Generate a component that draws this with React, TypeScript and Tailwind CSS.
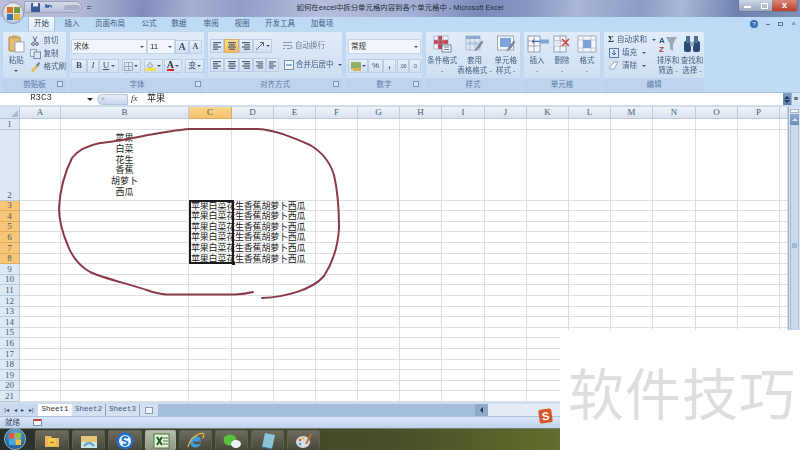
import type { ReactNode } from "react"

const columns = [
  { name: "A", w: 41 },
  { name: "B", w: 128 },
  { name: "C", w: 43 },
  { name: "D", w: 42 },
  { name: "E", w: 42 },
  { name: "F", w: 42 },
  { name: "G", w: 42 },
  { name: "H", w: 42 },
  { name: "I", w: 43 },
  { name: "J", w: 42 },
  { name: "K", w: 42 },
  { name: "L", w: 42 },
  { name: "M", w: 42 },
  { name: "N", w: 43 },
  { name: "O", w: 42 },
  { name: "P", w: 42 },
  { name: "", w: 8 },
]

const tabs = [
  { name: "开始", w: 27 },
  { name: "插入", w: 34 },
  { name: "页面布局", w: 42 },
  { name: "公式", w: 36 },
  { name: "数据", w: 24 },
  { name: "审阅", w: 40 },
  { name: "视图", w: 22 },
  { name: "开发工具", w: 54 },
  { name: "加载项", w: 30 },
]

const rows = Array.from({ length: 21 }, (_, i) => i + 1)
const vegetables = ["苹果", "白菜", "花生", "香蕉", "胡萝卜", "西瓜"]

function Caret({ className = "" }: { className?: string }) {
  return <span className={`inline-block w-0 h-0 border-x-[2px] border-x-transparent border-t-[2px] border-t-[#44546a] ${className}`} />
}

function Group({ w, label, launcher, children }: { w: number; label: string; launcher?: boolean; children: ReactNode }) {
  return (
    <div
      className="h-full flex flex-col rounded-[2px] border border-[#c3d5ea] bg-[linear-gradient(#e2ecf9,#d3e2f4_55%,#c9dbf1)] overflow-hidden"
      style={{ width: w }}
    >
      <div className="flex-1 min-h-0 relative">{children}</div>
      <div className="h-[13px] shrink-0 bg-[#bdd3ee] flex items-center justify-center relative text-[7.5px] text-[#5d7ca6]">
        {label}
        {launcher && (
          <span className="absolute right-[3px] top-[3px] w-[6px] h-[6px] border border-[#7d95b5] bg-[#d5e3f4]" />
        )}
      </div>
    </div>
  )
}

function SmallBtn({ children, className = "", w }: { children: ReactNode; className?: string; w?: number }) {
  return (
    <div
      className={`h-[14px] flex items-center justify-center border border-[#b9cde6] bg-[linear-gradient(#e6eff9,#cfdff2)] text-[#3d4f68] ${className}`}
      style={{ width: w }}
    >
      {children}
    </div>
  )
}

function SmallRow({ icon, label, caret }: { icon: ReactNode; label: string; caret?: boolean }) {
  return (
    <div className="h-[13px] flex items-center gap-[3px] text-[7.5px] text-[#47607f] whitespace-nowrap">
      <span className="w-[11px] h-[11px] flex items-center justify-center">{icon}</span>
      {label}
      {caret && <Caret className="ml-[2px]" />}
    </div>
  )
}

function BigBtn({ w, icon, lines }: { w: number; icon: ReactNode; lines: string[] }) {
  return (
    <div className="flex flex-col items-center pt-[3px]" style={{ width: w }}>
      <div className="h-[18px] w-[20px]">{icon}</div>
      <div className="mt-[3px] text-[7.5px] leading-[10px] text-[#47607f] text-center whitespace-nowrap">
        {lines.map((l) => (
          <div key={l}>{l}</div>
        ))}
      </div>
    </div>
  )
}

function Lines({ align }: { align: "l" | "c" | "r" }) {
  const xs = align === "l" ? [2, 2, 2, 2] : align === "c" ? [2, 3, 2, 3] : [2, 4, 2, 4]
  const ws = align === "l" ? [8, 5, 8, 5] : align === "c" ? [8, 6, 8, 6] : [8, 6, 8, 6]
  return (
    <svg width="12" height="10" viewBox="0 0 12 10">
      {xs.map((x, i) => (
        <rect key={i} x={x} y={1 + i * 2.2} width={ws[i]} height="1.2" fill="#4d5b70" />
      ))}
    </svg>
  )
}

function Brush() {
  return <path d="M11 16l2-4 5-6 1 1-4 6z" fill="#7f8b9c" stroke="#59667a" strokeWidth=".5" />
}

function CondIcon() {
  return (
    <svg width="20" height="18" viewBox="0 0 20 18">
      <rect x="2" y="1" width="14" height="13" fill="#f3f6fa" stroke="#9aa8ba" strokeWidth=".7" />
      <rect x="2" y="5" width="14" height="4" fill="#c7405a" />
      <rect x="6" y="1" width="4" height="13" fill="#c7405a" />
      <path d="M6 1v13M11 1v13M2 5h14M2 9h14" stroke="#9aa8ba" strokeWidth=".6" />
      <rect x="10" y="10" width="9" height="7" fill="#f4f6f9" stroke="#4b5a6e" strokeWidth=".7" />
      <path d="M12 12h5M12 14.500h5" stroke="#4b5a6e" strokeWidth=".8" />
    </svg>
  )
}

function TableIcon() {
  return (
    <svg width="20" height="18" viewBox="0 0 20 18">
      <rect x="2" y="1" width="14" height="14" fill="#dfe9f5" stroke="#9aa8ba" strokeWidth=".7" />
      <rect x="2" y="1" width="14" height="3" fill="#8ea9ce" />
      <rect x="2" y="7" width="14" height="3" fill="#b9cde6" />
      <path d="M6 1v14M11 1v14" stroke="#9aa8ba" strokeWidth=".6" />
      <Brush />
    </svg>
  )
}

function StyleIcon() {
  return (
    <svg width="20" height="18" viewBox="0 0 20 18">
      <rect x="1.500" y="1" width="16" height="14" fill="#f3f6fa" stroke="#8c98a8" strokeWidth=".8" />
      <rect x="4" y="3" width="11" height="9" fill="#7fa3dc" />
      <Brush />
    </svg>
  )
}

function InsertIcon() {
  return (
    <svg width="24" height="18" viewBox="0 0 24 18">
      <rect x="1" y="1" width="12" height="16" fill="#f4f6f9" stroke="#6f7d90" strokeWidth=".7" />
      <path d="M7 1v16M1 6h12M1 11h12" stroke="#6f7d90" strokeWidth=".6" />
      <rect x="13" y="4.500" width="9" height="4" fill="#7fa6d8" />
      <path d="M13 6.500H5M7.500 4.500 5 6.500l2.500 2" stroke="#2e5f9f" fill="none" strokeWidth=".9" />
    </svg>
  )
}

function DeleteIcon() {
  return (
    <svg width="20" height="18" viewBox="0 0 20 18">
      <rect x="2" y="1" width="12" height="16" fill="#f4f6f9" stroke="#6f7d90" strokeWidth=".7" />
      <path d="M8 1v16M2 6h12M2 11h12" stroke="#6f7d90" strokeWidth=".6" />
      <rect x="2" y="6" width="6" height="5" fill="#dfe7f1" />
      <path d="M10 4l7 7M17 4l-7 7" stroke="#d5423a" strokeWidth="1.500" />
    </svg>
  )
}

function FormatIcon() {
  return (
    <svg width="20" height="18" viewBox="0 0 20 18">
      <rect x="1" y="1" width="18" height="16" fill="#f3f6fa" stroke="#8c98a8" strokeWidth=".8" />
      <path d="M6 1v16M14 1v16M1 5h18M1 13h18" stroke="#a8b4c4" strokeWidth=".6" />
      <rect x="6" y="5" width="8" height="8" fill="#7fa3d0" />
    </svg>
  )
}

function TaskBtn({ w, active, children }: { w: number; active?: boolean; children: ReactNode }) {
  return (
    <div
      className={`h-[20px] flex items-center justify-center rounded-[2px] border-x border-t ${
        active
          ? "border-[#a7ad9b] bg-[linear-gradient(#b6bbac,#8f9686)]"
          : "border-[#5f5f50] bg-[linear-gradient(#6d6b5c,#46463a)]"
      }`}
      style={{ width: w }}
    >
      {children}
    </div>
  )
}

export default function App() {
  return (
    <div className="relative w-[800px] h-[450px] overflow-hidden bg-white font-['Liberation_Sans','Noto_Sans_CJK_SC',sans-serif]">
      <div className="relative h-full flex flex-col blur-[0.4px]">
        {/* title bar */}
        <div className="h-[17px] shrink-0 relative bg-[linear-gradient(100deg,#b9bed6_0%,#b4b9d3_10%,#9aa5c9_14%,#7f8cbb_18%,#a7b0d2_24%,#8f9dc8_30%,#b5bedc_40%,#a2afd4_52%,#7b8bb8_60%,#8697c2_66%,#a8b6d7_72%,#8b9dc6_80%,#a9b8d8_85%,#6f82ae_92%,#7e8fb8_100%)] flex justify-center">
          <span className="mt-[3px] text-[7.4px] leading-[10px] text-[#222c3c] whitespace-nowrap">
            如何在excel中拆分单元格内容到各个单元格中 - Microsoft Excel
          </span>
          <div className="absolute right-[2px] top-0 w-[60px] h-[12px] flex rounded-b-[3px] overflow-hidden border border-t-0 border-[#6d7b96]">
            <div className="w-[17px] bg-[linear-gradient(#cfd7e6,#9aa8c2)] flex items-center justify-center">
              <span className="w-[7px] h-[2px] bg-white mt-[3px]" />
            </div>
            <div className="w-[16px] bg-[linear-gradient(#cfd7e6,#9aa8c2)] flex items-center justify-center">
              <span className="w-[7px] h-[6px] border border-white" />
            </div>
            <div className="flex-1 bg-[linear-gradient(#d98878,#b8402c)] flex items-center justify-center text-white text-[9px] leading-none font-bold">
              x
            </div>
          </div>
        </div>

        {/* tabs */}
        <div className="h-[14px] shrink-0 bg-[#bfdaf6] relative flex pl-[28px] items-end">
          {tabs.map((t, i) => (
            <div
              key={t.name}
              className={`h-[15px] -mt-[1px] flex items-center justify-center text-[7.5px] whitespace-nowrap ${
                i === 0
                  ? "bg-[linear-gradient(#f4f8fd,#dde9f7)] border-x border-t border-[#a9c0dc] rounded-t-[2px] text-[#2d3f58]"
                  : "text-[#3f5a80]"
              }`}
              style={{ width: t.w }}
            >
              {t.name}
            </div>
          ))}
          <div className="absolute right-0 top-0 h-full w-[50px] flex items-center justify-between pr-[4px] text-[#4d6a90] text-[9px]">
            <span className="w-[8px] h-[8px] rounded-full bg-[#2f6fb5] text-white text-[6px] leading-[8px] text-center">?</span>
            <span className="w-[4px] h-[1px] bg-[#5d7796]" />
            <span className="w-[5px] h-[4px] border border-[#5d7796]" />
            <span className="leading-none text-[8px]">×</span>
          </div>
        </div>

        {/* ribbon */}
        <div className="h-[61px] shrink-0 bg-[#bfdaf6] flex gap-[2px] pl-[2px]">
          <Group w={65} label="剪贴板" launcher>
            <div className="flex h-full">
              <div className="w-[28px] flex flex-col items-center pt-[3px]">
                <svg width="18" height="18" viewBox="0 0 18 18">
                  <rect x="2" y="2" width="11" height="14" rx="1" fill="#e5bd74" stroke="#a9874a" />
                  <rect x="5" y="0.5" width="5" height="3" fill="#c9a45f" />
                  <rect x="8" y="7" width="9" height="10" fill="#fafcff" stroke="#9aa8b8" />
                </svg>
                <span className="mt-[3px] text-[7.5px] leading-[10px] text-[#47607f]">粘贴</span>
                <Caret className="mt-[4px]" />
              </div>
              <div className="flex flex-col pt-[2px]">
                <SmallRow
                  label="剪切"
                  icon={
                    <svg width="10" height="10" viewBox="0 0 10 10" fill="none" stroke="#56657a" strokeWidth="1">
                      <path d="M3 0.5 6 6M7 0.5 4 6" />
                      <circle cx="3" cy="8" r="1.400" />
                      <circle cx="7" cy="8" r="1.400" />
                    </svg>
                  }
                />
                <SmallRow
                  label="复制"
                  icon={
                    <svg width="11" height="10" viewBox="0 0 11 10">
                      <rect x="0.5" y="0.5" width="6" height="7" fill="#eef3fa" stroke="#8ba1bc" />
                      <rect x="4" y="3" width="6.500" height="6.500" fill="#dbe7f5" stroke="#6e8bb0" />
                    </svg>
                  }
                />
                <SmallRow
                  label="格式刷"
                  icon={
                    <svg width="11" height="11" viewBox="0 0 11 11">
                      <path d="M1 10 6 4l2 2-5 5z" fill="#e8b949" />
                      <path d="M6 4l3-3 1 1-2 4z" fill="#6b7b91" />
                    </svg>
                  }
                />
              </div>
            </div>
          </Group>

          <Group w={136} label="字体" launcher>
            <div className="flex flex-col gap-[5px] pt-[7px] pl-[1px]">
              <div className="flex items-center">
                <div className="w-[76px] h-[15px] bg-[#f2f6fc] border border-[#c3d3e8] flex items-center justify-between px-[2px] text-[7.5px] text-[#333]">
                  宋体
                  <Caret />
                </div>
                <div className="w-[28px] h-[15px] bg-[#f2f6fc] border border-[#c3d3e8] flex items-center justify-between px-[2px] text-[8px] text-[#333]">
                  11
                  <Caret />
                </div>
                <SmallBtn w={14} className="font-['Liberation_Serif',serif] text-[10px] font-bold">A</SmallBtn>
                <SmallBtn w={13} className="font-['Liberation_Serif',serif] text-[8px] font-bold">A</SmallBtn>
              </div>
              <div className="flex items-center gap-[1px]">
                <div className="flex">
                  <SmallBtn w={16} className="font-['Liberation_Serif',serif] text-[9px] font-bold">B</SmallBtn>
                  <SmallBtn w={12} className="font-['Liberation_Serif',serif] text-[9px] italic">I</SmallBtn>
                  <SmallBtn w={20} className="font-['Liberation_Serif',serif] text-[9px] underline gap-[2px]">U<Caret /></SmallBtn>
                </div>
                <SmallBtn w={20} className="gap-[1px] ml-[2px]">
                  <svg width="9" height="9" viewBox="0 0 9 9" fill="none" stroke="#8e9aab" strokeWidth=".8"><path d="M.5.5h8v8h-8zM4.5.5v8M.5 4.5h8" /></svg>
                  <Caret />
                </SmallBtn>
                <SmallBtn w={20} className="gap-[1px] ml-[2px]">
                  <svg width="11" height="10" viewBox="0 0 11 10"><rect y="7" width="11" height="3" fill="#f2e34c" /><path d="M2 5l3-4 3 4-3 2z" fill="#cfd8e3" stroke="#7d8a9c" strokeWidth=".6" /></svg>
                  <Caret />
                </SmallBtn>
                <SmallBtn w={20} className="gap-[1px]">
                  <span className="font-['Liberation_Serif',serif] text-[10px] leading-[8px] font-bold border-b-[2px] border-[#d8262c] text-[#333]">A</span>
                  <Caret />
                </SmallBtn>
                <SmallBtn w={20} className="gap-[1px] ml-[2px] text-[8px]">变<Caret /></SmallBtn>
              </div>
            </div>
          </Group>

          <Group w={136} label="对齐方式" launcher>
            <div className="flex flex-col gap-[5px] pt-[7px] pl-[2px]">
              <div className="flex items-center">
                <SmallBtn w={14}><Lines align="l" /></SmallBtn>
                <SmallBtn w={15} className="bg-[linear-gradient(#fbdc93,#f4bd5f)] border-[#d7b06c]"><Lines align="c" /></SmallBtn>
                <SmallBtn w={14}><Lines align="r" /></SmallBtn>
                <SmallBtn w={19} className="gap-[1px]">
                  <svg width="10" height="10" viewBox="0 0 10 10" fill="none" stroke="#59677c"><path d="M1 9 8 2M5 1.500h3.500V5" /></svg>
                  <Caret />
                </SmallBtn>
                <div className="ml-[11px] flex items-center gap-[2px] text-[7.5px] text-[#6b8098] whitespace-nowrap">
                  <svg width="10" height="10" viewBox="0 0 10 10" fill="none" stroke="#8a98ab"><path d="M0 1.500h9M0 4.500h7q2 0 2 1.500T7 7.500H4M0 7.500h2" /></svg>
                  自动换行
                </div>
              </div>
              <div className="flex items-center">
                <SmallBtn w={14}><Lines align="l" /></SmallBtn>
                <SmallBtn w={15}><Lines align="c" /></SmallBtn>
                <SmallBtn w={14}><Lines align="r" /></SmallBtn>
                <SmallBtn w={13}><Lines align="r" /></SmallBtn>
                <SmallBtn w={13}><Lines align="l" /></SmallBtn>
                <div className="ml-[5px] flex items-center gap-[2px] text-[7.5px] text-[#47607f] whitespace-nowrap">
                  <svg width="10" height="10" viewBox="0 0 10 10"><rect x=".5" y=".5" width="9" height="9" fill="#eef3fa" stroke="#7d8ea4" /><path d="M2 5h6" stroke="#2f6fb5" /></svg>
                  合并后居中
                  <Caret className="ml-[2px]" />
                </div>
              </div>
            </div>
          </Group>

          <Group w={78} label="数字" launcher>
            <div className="flex flex-col gap-[5px] pt-[7px] pl-[2px]">
              <div className="w-[73px] h-[15px] bg-[#f2f6fc] border border-[#c3d3e8] flex items-center justify-between px-[2px] text-[7.5px] text-[#333]">
                常规
                <Caret />
              </div>
              <div className="flex items-center">
                <SmallBtn w={20} className="gap-[1px]">
                  <svg width="10" height="9" viewBox="0 0 10 9"><rect width="10" height="7" fill="#8fb06b" /><rect x="2" y="6" width="8" height="3" fill="#d9b04f" /></svg>
                  <Caret />
                </SmallBtn>
                <SmallBtn w={15} className="text-[8px]">%</SmallBtn>
                <SmallBtn w={13} className="text-[9px] font-bold">,</SmallBtn>
                <SmallBtn w={12} className="ml-[1px] text-[5px] leading-none">.00</SmallBtn>
                <SmallBtn w={12} className="text-[5px] leading-none">.0</SmallBtn>
              </div>
            </div>
          </Group>

          <Group w={96} label="样式">
            <div className="flex pl-[1px]">
              <BigBtn w={31} lines={["条件格式", "-"]} icon={<CondIcon />} />
              <BigBtn w={34} lines={["套用", "表格格式 -"]} icon={<TableIcon />} />
              <BigBtn w={29} lines={["单元格", "样式 -"]} icon={<StyleIcon />} />
            </div>
          </Group>

          <Group w={78} label="单元格">
            <div className="flex">
              <BigBtn w={26} lines={["插入", "-"]} icon={<InsertIcon />} />
              <BigBtn w={24} lines={["删除", "-"]} icon={<DeleteIcon />} />
              <BigBtn w={26} lines={["格式", "-"]} icon={<FormatIcon />} />
            </div>
          </Group>

          <Group w={102} label="编辑">
            <div className="flex pl-[4px]">
              <div className="w-[48px] flex flex-col pt-[1px]">
                <SmallRow label="自动求和" caret icon={<span className="font-['Liberation_Serif',serif] text-[9px] font-bold text-[#333]">Σ</span>} />
                <SmallRow
                  label="填充"
                  caret
                  icon={<svg width="10" height="10" viewBox="0 0 10 10"><rect x=".5" y=".5" width="9" height="9" fill="#dbe7f5" stroke="#5b7ba6" /><path d="M5 2v5M3 5l2 2 2-2" fill="none" stroke="#2f5f9c" /></svg>}
                />
                <SmallRow
                  label="清除"
                  caret
                  icon={<svg width="11" height="9" viewBox="0 0 11 9"><path d="M1 7 6 1h4L6 8H3z" fill="#f4f6f9" stroke="#7a8798" strokeWidth=".7" /></svg>}
                />
              </div>
              <BigBtn
                w={24}
                lines={["排序和", "筛选 -"]}
                icon={
                  <svg width="20" height="18" viewBox="0 0 20 18">
                    <text x="1" y="8" fontSize="8" fontWeight="bold" fill="#2b4f80" fontFamily="Liberation Sans">A</text>
                    <text x="1" y="17" fontSize="8" fontWeight="bold" fill="#a33" fontFamily="Liberation Sans">Z</text>
                    <path d="M8 2h11l-4 7v7l-3-2V9z" fill="#9aa8b8" />
                  </svg>
                }
              />
              <BigBtn
                w={24}
                lines={["查找和", "选择 -"]}
                icon={
                  <svg width="20" height="18" viewBox="0 0 20 18">
                    <rect x="2" y="6" width="7" height="11" rx="2" fill="#2b4a75" />
                    <rect x="11" y="6" width="7" height="11" rx="2" fill="#2b4a75" />
                    <rect x="4" y="1" width="4" height="7" fill="#4c6c99" />
                    <rect x="12" y="1" width="4" height="7" fill="#4c6c99" />
                    <rect x="8" y="7" width="4" height="4" fill="#8ba4c6" />
                  </svg>
                }
              />
            </div>
          </Group>
        </div>

        {/* formula bar */}
        <div className="h-[13px] shrink-0 bg-[#a9c1dc] flex flex-col">
          <div className="h-[12px] mt-[1px] bg-white flex items-center relative">
            <div className="w-[87px] shrink-0 text-center pr-[5px] font-['Liberation_Mono',monospace] text-[9px] text-[#333]">R3C3</div>
            <span className="w-0 h-0 border-x-[3px] border-x-transparent border-t-[3px] border-t-[#222]" />
            <div className="ml-[4px] w-[31px] h-[11px] rounded-l-full border border-[#b3c4da] bg-[linear-gradient(#e6eef8,#c6d6ea)] flex items-center pl-[3px] text-[7px] text-[#8fa2bc]">
              ×
            </div>
            <span className="ml-[3px] w-[12px] font-['Liberation_Serif',serif] italic text-[9px] text-[#333]">fx</span>
            <span className="ml-[4px] text-[9px] text-[#222]">苹果</span>
            <div className="absolute right-0 top-0 h-full flex">
              <div className="w-[8px] bg-[linear-gradient(#7e9dc6,#5b7fae)] flex flex-col items-center justify-center gap-[1px]">
                <span className="w-0 h-0 border-x-[3px] border-x-transparent border-b-[3px] border-b-[#20344f]" />
                <span className="w-0 h-0 border-x-[3px] border-x-transparent border-t-[3px] border-t-[#20344f]" />
              </div>
              <div className="w-[9px] bg-[#d7e4f4] border-l border-[#9fb6d2] flex items-center justify-center text-[8px] leading-none font-bold text-[#223]">»</div>
            </div>
          </div>
        </div>

        {/* grid */}
        <div className="h-[299px] shrink-0 relative flex bg-[#cfdceb] pt-[2px]">
          <div className="flex-1 flex flex-col">
            <div className="h-[12px] shrink-0 flex">
              <div className="w-[20px] shrink-0 bg-[#d5e3f3] border-r border-b border-[#b2c4da] flex items-end justify-end p-[1px]">
                <span className="w-0 h-0 border-l-[7px] border-l-transparent border-b-[7px] border-b-[#a8bdd6]" />
              </div>
              {columns.map((c) => (
                <div
                  key={c.name}
                  className={`shrink-0 flex items-center justify-center border-r border-b font-['Liberation_Serif',serif] text-[9px] ${
                    c.name === "C"
                      ? "bg-[linear-gradient(#fad592,#f6c16b)] border-[#d9aa62] text-[#5c4a2a]"
                      : "bg-[linear-gradient(#eef3f9,#d8e3f0)] border-[#bccadb] text-[#4a5a70]"
                  }`}
                  style={{ width: c.w }}
                >
                  {c.name}
                </div>
              ))}
            </div>
            {rows.map((r) => {
              const sel = r >= 3 && r <= 8
              return (
                <div key={r} className={`shrink-0 flex ${r === 2 ? "h-[71px]" : "h-[10.6px]"}`}>
                  <div
                    className={`w-[20px] shrink-0 flex items-end justify-center border-r border-b font-['Liberation_Serif',serif] text-[9px] leading-[10px] text-[#4a5a70] ${
                      sel ? "bg-[#f7c677] border-[#dcae68]" : "bg-[#dde8f5] border-[#b8c9de]"
                    }`}
                  >
                    {r}
                  </div>
                  {columns.map((c) => (
                    <div
                      key={c.name}
                      className="shrink-0 relative bg-white border-r border-b border-[#dcdfe3] text-[9px] leading-[10.7px] text-[#222]"
                      style={{ width: c.w }}
                    >
                      {c.name === "B" && r === 2 && (
                        <div className="absolute left-0 right-0 bottom-[2px] text-center">
                          {vegetables.map((v) => (
                            <div key={v}>{v}</div>
                          ))}
                        </div>
                      )}
                      {c.name === "C" && sel && (
                        <span className="absolute left-[2px] top-0 whitespace-nowrap tracking-[-0.2px] z-10">苹果白菜花生香蕉胡萝卜西瓜</span>
                      )}
                    </div>
                  ))}
                </div>
              )
            })}
          </div>
          <div className="w-[12px] shrink-0 bg-[#d9e5f3] border-l border-[#9fb4cd] flex flex-col items-center pt-[2px]">
            <div className="w-[9px] h-[4px] bg-white border border-[#9fb4cd] shrink-0" />
            <div className="w-[9px] h-[11px] mt-[1px] shrink-0 bg-[linear-gradient(#8fabd0,#6c8cb8)] flex items-center justify-center">
              <span className="w-0 h-0 border-x-[3px] border-x-transparent border-b-[3px] border-b-[#dfe8f3]" />
            </div>
            <div className="w-[9px] flex-1 bg-[#c9d9ec] border-x border-[#a9bdd6] flex items-start justify-center pt-[118px]">
              <span className="w-[5px] h-[5px] bg-[#a5b8cf]" />
            </div>
          </div>
          {/* selection */}
          <div className="absolute left-[189px] top-[95px] w-[45px] h-[64px] border-2 border-[#1a1a1a] pointer-events-none z-20" />
          <div className="absolute left-[232px] top-[157px] w-[3px] h-[3px] bg-[#1a1a1a] z-20" />
        </div>

        {/* sheet tabs */}
        <div className="h-[12px] shrink-0 flex items-center bg-[#a5bedd] relative">
          <div className="w-[38px] h-full bg-[#c9daf0] flex items-center justify-around px-[2px] text-[6px] leading-none text-[#2a3c55]">
            <span>|◂</span>
            <span>◂</span>
            <span>▸</span>
            <span>▸|</span>
          </div>
          <div className="w-[34px] h-full bg-white flex items-center justify-center font-['Liberation_Mono',monospace] text-[7.5px] text-[#333]">Sheet1</div>
          <div className="w-[68px] h-full flex items-center bg-[#d3e1f3] font-['Liberation_Mono',monospace] text-[7.5px] text-[#445a78]">
            <span className="w-[34px] text-center border-r border-[#8ba4c4]">Sheet2</span>
            <span className="w-[34px] text-center border-r border-[#8ba4c4]">Sheet3</span>
          </div>
          <div className="w-[18px] h-full bg-[#d3e1f3] flex items-center justify-center">
            <span className="w-[8px] h-[7px] border border-[#8a9bb2] bg-[#eef3fa]" />
          </div>
          <div className="ml-auto w-[325px] h-full flex items-center bg-[#e4ecf6]">
            <div className="w-[13px] h-full bg-[#8ea9cc] flex items-center justify-center">
              <span className="w-0 h-0 border-y-[3px] border-y-transparent border-r-[3px] border-r-[#20344f]" />
            </div>
          </div>
        </div>

        {/* status bar */}
        <div className="h-[12px] shrink-0 flex items-center bg-[linear-gradient(#dbe7f6,#bdd1ea)] border-t border-[#a9c0dc] text-[7.5px] text-[#3d4f68]">
          <span className="ml-[5px]">就绪</span>
          <span className="ml-[13px] w-[9px] h-[7px] bg-[#f3f5f8] border border-[#7f8ea3] border-t-[2px] border-t-[#c04a3a]" />
        </div>

        {/* taskbar */}
        <div className="h-[22px] shrink-0 flex items-end pl-[35px] gap-[3px] bg-[linear-gradient(90deg,#26302c,#3b4030_20%,#4a5027_50%,#5e6b2c_68%,#6b6f3a_72%,#4e5a22_100%)] border-t border-[#777f78]">
          <TaskBtn w={34}>
            <svg width="16" height="16" viewBox="0 0 16 16">
              <path d="M1 3h6l1 2h7v9H1z" fill="#e8b95a" />
              <circle cx="8" cy="9" r="4" fill="#f6cf4d" />
              <path d="M6 9q2 2 4 0" stroke="#8a5a1a" fill="none" />
            </svg>
          </TaskBtn>
          <TaskBtn w={33}>
            <svg width="18" height="16" viewBox="0 0 18 16">
              <path d="M1 3h16v12H1z" fill="#e5c577" />
              <path d="M1 9h16v6H1z" fill="#cfe3ea" />
              <path d="M4 13q5-6 10 0" stroke="#5c9fc4" strokeWidth="2" fill="none" />
            </svg>
          </TaskBtn>
          <TaskBtn w={34}>
            <svg width="18" height="18" viewBox="0 0 18 18">
              <circle cx="9" cy="9" r="8.500" fill="#1f6fd0" />
              <circle cx="9" cy="9" r="6" fill="#f4f8fc" />
              <path d="M12 6Q9 4 7 6t2 3 2 3-4 0" stroke="#1f6fd0" strokeWidth="1.800" fill="none" />
            </svg>
          </TaskBtn>
          <TaskBtn w={31} active>
            <svg width="18" height="16" viewBox="0 0 18 16">
              <rect x="2" y="1" width="15" height="14" fill="#e6f0da" stroke="#4d7d3a" />
              <path d="M5 4l5 8M10 4l-5 8" stroke="#1d5c22" strokeWidth="2" />
              <path d="M11 5h5M11 8h5M11 11h5" stroke="#4d7d3a" />
            </svg>
          </TaskBtn>
          <TaskBtn w={33}>
            <svg width="18" height="18" viewBox="0 0 18 18">
              <path d="M3 10c0-4 3-6 6-6s5 2 5 5.500H6c0 3 5 4 8 1.500-1 3-3 4.500-5.500 4.500C5 15.500 3 13 3 10z" fill="#3d9be0" />
              <path d="M1 15C3 7 10 1 16 1.500c1.500.5 1 3-.5 5" stroke="#e9b93d" fill="none" strokeWidth="1.200" />
            </svg>
          </TaskBtn>
          <TaskBtn w={33}>
            <svg width="20" height="16" viewBox="0 0 20 16">
              <ellipse cx="8" cy="7" rx="6.500" ry="5.500" fill="#58c13c" />
              <ellipse cx="14" cy="11" rx="5" ry="4" fill="#eef2ee" />
            </svg>
          </TaskBtn>
          <TaskBtn w={33}>
            <svg width="16" height="18" viewBox="0 0 16 18">
              <path d="M5 1l10 2-3 14L2 15z" fill="#8cc4d8" />
              <path d="M2 15l10 2 .5-2.500" stroke="#3d6f86" fill="none" />
            </svg>
          </TaskBtn>
          <TaskBtn w={33}>
            <svg width="18" height="18" viewBox="0 0 18 18">
              <ellipse cx="8" cy="10" rx="7" ry="6" fill="#d7dee2" />
              <circle cx="5" cy="8" r="1.300" fill="#d9534f" />
              <circle cx="8" cy="6.500" r="1.300" fill="#e9b93d" />
              <circle cx="5" cy="12" r="1.300" fill="#4d9be0" />
              <path d="M11 12l5-10" stroke="#b5763a" strokeWidth="2" />
            </svg>
          </TaskBtn>
        </div>

        {/* office orb, quick access bar, start orb float over the bars */}
        <div className="absolute left-[2px] top-[2px] w-[22px] h-[22px] rounded-full border border-[#8f9fb8] bg-[radial-gradient(circle_at_50%_30%,#f7f3e4,#c9d2df_70%,#98a8c0)] flex items-center justify-center">
          <svg width="13" height="13" viewBox="0 0 13 13">
            <rect x="0" y="0" width="6" height="6" fill="#d8732a" />
            <rect x="7" y="0" width="6" height="6" fill="#6d9b3d" />
            <rect x="0" y="7" width="6" height="6" fill="#3d71b5" />
            <rect x="7" y="7" width="6" height="6" fill="#e0b23a" />
          </svg>
        </div>
        <div className="absolute left-[24px] top-[1px] w-[58px] h-[12px] rounded-r-full border border-[#9aa3bd] bg-[linear-gradient(#d6dbe9,#b7bfd8)] flex items-center pl-[6px] gap-[4px]">
          <svg width="9" height="9" viewBox="0 0 9 9"><rect width="9" height="9" rx="1" fill="#3b5a94" /><rect x="2" y="0" width="5" height="3.500" fill="#e8edf5" /></svg>
          <svg width="10" height="8" viewBox="0 0 10 8" fill="none" stroke="#3561a8" strokeWidth="1.500"><path d="M2 1v3h3M2 4q3-3 6 0" /></svg>
          <span className="w-[16px] h-[5px] ml-[6px] rounded-full bg-[#a9b1c9]" />
        </div>
        <span className="absolute left-[87px] top-[6px] w-[4px] h-[3px] border-b border-t border-[#5b6680]" />
        <div className="absolute left-[4px] top-[428px] w-[22px] h-[22px] rounded-full border border-[#9fb3c2] bg-[radial-gradient(circle_at_50%_35%,#8fc3e6,#2a6fa8_60%,#163f68)] flex items-center justify-center">
          <svg width="12" height="12" viewBox="0 0 12 12">
            <rect x="0" y="0" width="5.500" height="5.500" fill="#e25a3a" />
            <rect x="6.500" y="0" width="5.500" height="5.500" fill="#8cc63f" />
            <rect x="0" y="6.500" width="5.500" height="5.500" fill="#3fa9f5" />
            <rect x="6.500" y="6.500" width="5.500" height="5.500" fill="#f5c33b" />
          </svg>
        </div>

        {/* red hand-drawn circle */}
        <svg className="absolute left-0 top-0 pointer-events-none z-30" width="800" height="450" fill="none" stroke="#8a3a48" strokeWidth="2" strokeLinecap="round">
          <path d="M253 292 Q245 294 235 294.500 L166 294.500 Q155 293 148 290.500 C130 284 105 279 90 272 C78 265 72 256 68 246 C62 232 59 220 59 208 C60 190 63 176 72 158 C78 150 90 145 100 143 C125 141 160 131 190 129 L258 129 C275 130 292 137 310 145 C322 152 330 162 334 175 C338 192 339 212 339 228 C338 248 333 262 324 276 C312 290 285 297 262 298" />
        </svg>

        {/* sogou badge */}
        <div className="absolute left-[539px] top-[409px] w-[13px] h-[14px] rotate-[-8deg] rounded-[2px] bg-[#d4582a] flex items-center justify-center text-white text-[11px] leading-none font-bold z-30">
          S
        </div>
      </div>

      {/* watermark block */}
      <div className="absolute left-[560px] top-[330px] w-[240px] h-[120px] bg-white z-40 flex items-start pl-[8px] pt-[25px] font-['Noto_Sans_CJK_SC',sans-serif] text-[56px] leading-[72px] tracking-[1px] text-[#dedede] whitespace-nowrap">
        软件技巧
      </div>
    </div>
  )
}
